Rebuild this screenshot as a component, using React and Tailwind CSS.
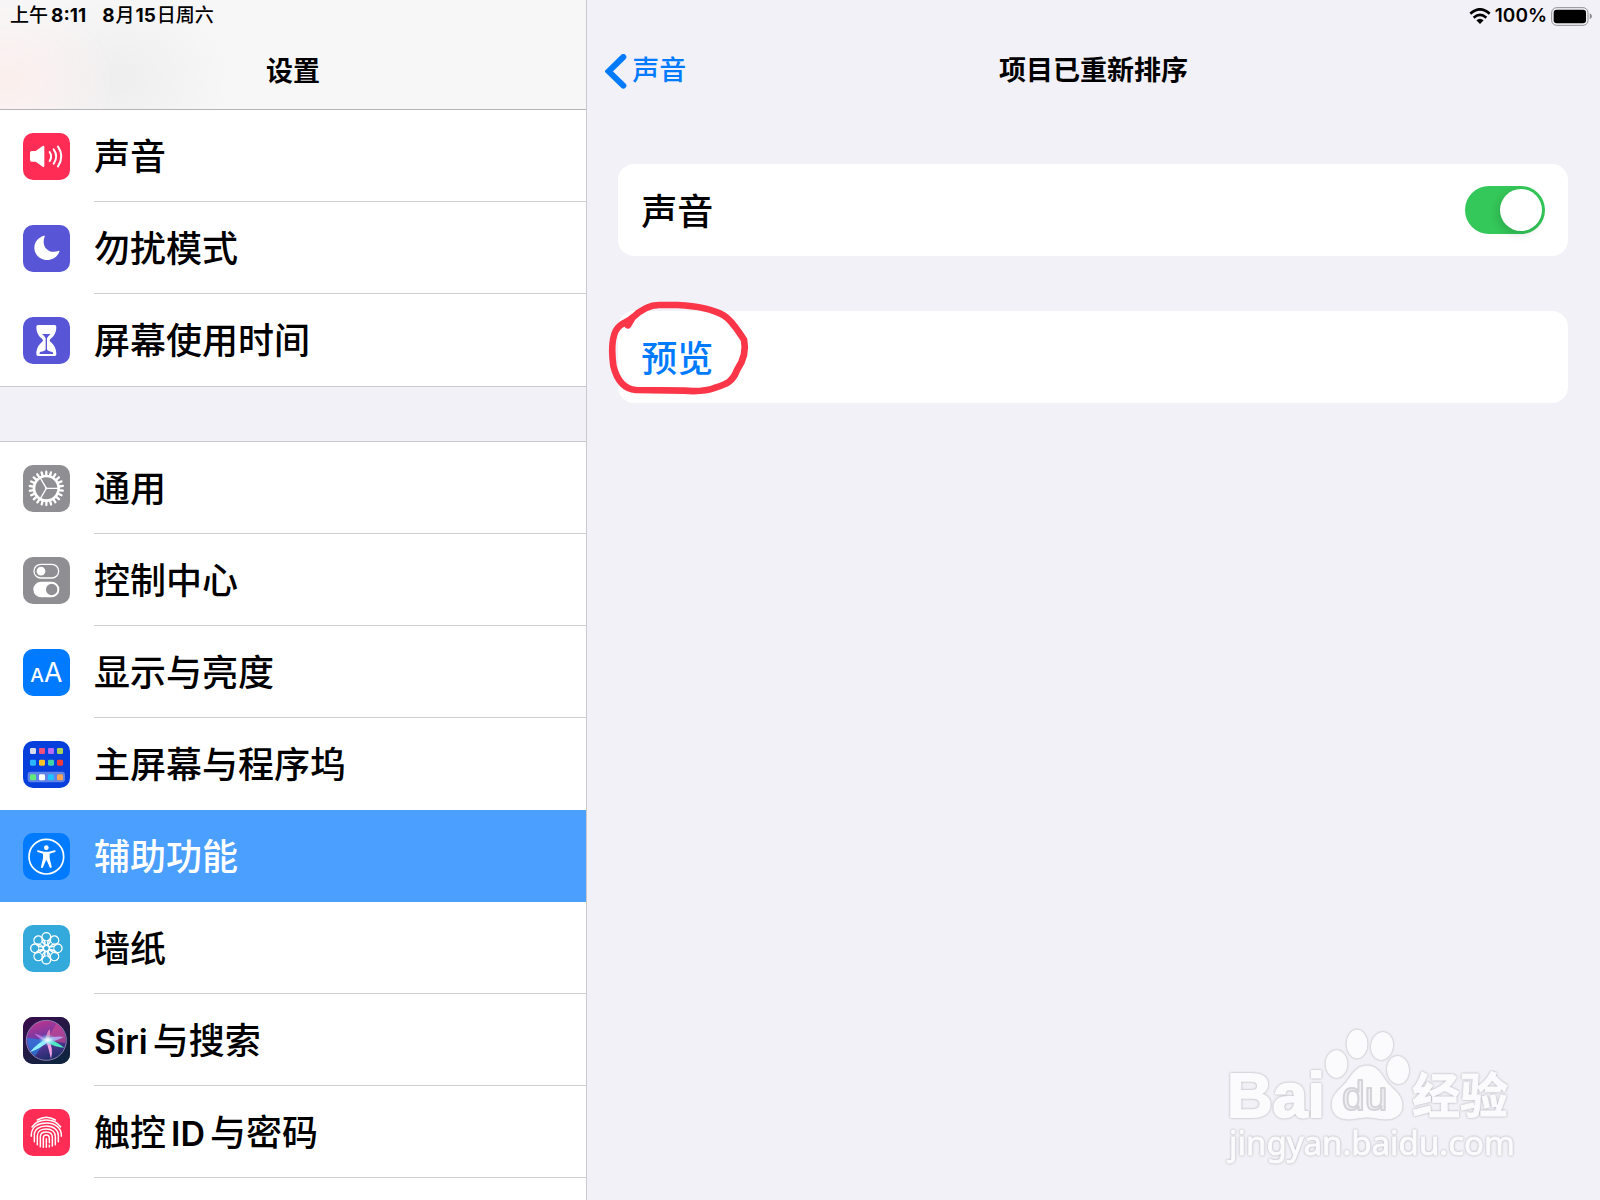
import React from 'react';

const angles = (count) => Array.from({ length: count }, (_, i) => (360 / count) * i);

const SoundIcon = () => (
  <g>
    <path
      d="M26 54h12L59 39q5-3 5 3v56q0 6-5 3L38 86H26q-5 0-5-5V59q0-5 5-5z"
      fill="#fff"
    />
    <g fill="none" stroke="#fff" strokeWidth="6" strokeLinecap="round">
      <path d="M80 57q9 13 0 27" />
      <path d="M92 49q15 21 0 43" />
      <path d="M105 41q20 29 0 59" />
    </g>
  </g>
);

const MoonIcon = () => (
  <path
    d="M62 32C46 38 34 50 34 68c0 21 17 37 38 37 17 0 32-10 37-25 1-2-1-3-3-2-23 8-44-5-44-28 0-6 1-11 3-15 1-2-1-4-3-3z"
    fill="#fff"
  />
);

const HourglassIcon = () => (
  <g>
    <path
      d="M45 24h50q5 0 5 5c0 19-8 29-18 37q-4 4 0 8c10 8 18 18 18 38q0 5-5 5H45q-5 0-5-5c0-20 8-30 18-38q4-4 0-8C48 58 40 48 40 29q0-5 5-5z"
      fill="#fff"
    />
    <path
      d="M57 51h26q-9 7-11 13v33q2 6 17 8 2 4 1 6H50q-1-2 1-6 15-2 17-8V64q-2-6-11-13z"
      fill="#5856d6"
    />
  </g>
);

const GearIcon = () => (
  <g transform="translate(70 70)" fill="none" stroke="#fff">
    <circle r="37" strokeWidth="8" />
    {angles(22).map((a) => (
      <path key={a} d="M38 0H50" strokeWidth="7" strokeLinecap="round" transform={`rotate(${a + 8})`} />
    ))}
    {angles(3).map((a) => (
      <path key={a} d="M0 0H37" strokeWidth="4" transform={`rotate(${a})`} />
    ))}
    <circle r="3" fill="#fff" stroke="none" />
  </g>
);

const ControlIcon = () => (
  <g>
    <rect x="33" y="22" width="74" height="41" rx="20.5" fill="none" stroke="#fff" strokeWidth="4" />
    <circle cx="54" cy="42.500" r="13" fill="#fff" />
    <rect x="31" y="74" width="78" height="47" rx="23.5" fill="#fff" />
    <circle cx="86" cy="97.500" r="17" fill="#8e8e93" />
  </g>
);

const DisplayIcon = () => (
  <g fill="#fff" className="font-[Inter] font-medium">
    <text x="22" y="99" fontSize="58">A</text>
    <text x="63" y="99" fontSize="80" className="font-normal">A</text>
  </g>
);

const dots = [
  ['#d9dcec', '#f4507e', '#b46cf5', '#a9d455'],
  ['#2bb5ff', '#ffc328', '#41d3a9', '#f03b3b'],
  ['#62ea7b', '#ffffff', '#20c3ff', '#f7a456'],
];

const HomeIcon = () => (
  <g>
    <rect x="14" y="92" width="112" height="32" rx="9" fill="#5f83e6" />
    {dots.map((row, r) =>
      row.map((color, c) => (
        <rect key={color} x={21 + c * 27} y={[21, 56, 100][r]} width="18" height="18" rx="4" fill={color} />
      ))
    )}
  </g>
);

const AccessibilityIcon = () => (
  <g>
    <circle cx="70" cy="71" r="52" fill="none" stroke="#fff" strokeWidth="5" />
    <circle cx="70" cy="44" r="7" fill="#fff" />
    <path
      d="M45 52l18 4h14l18-4q3 0 3 2t-2 3l-16 5v14l6 25q0 3-2 4t-4-2L71 82h-2l-9 21q-1 3-4 2t-2-4l6-25V62l-16-5q-2-1-2-3t3-2z"
      fill="#fff"
    />
  </g>
);

const WallpaperIcon = () => (
  <g transform="translate(70 70)" fill="none" stroke="#fff" strokeWidth="4">
    {angles(8).map((a) => (
      <path
        key={a}
        d="M9 0C12 -9 22 -14 34 -13A13 13 0 0 1 34 13C22 14 12 9 9 0z"
        transform={`rotate(${a})`}
      />
    ))}
    {angles(8).map((a) => (
      <path key={a} d="M25 -11Q20 0 25 11" strokeWidth="3" transform={`rotate(${a})`} />
    ))}
    <circle r="9" />
  </g>
);

const SiriIcon = () => (
  <g>
    <defs>
      <linearGradient id="siriBg" x1="0" y1="0" x2="0.6" y2="1">
        <stop offset="0" stopColor="#3a0b4c" />
        <stop offset="1" stopColor="#10243f" />
      </linearGradient>
      <linearGradient id="siriBall" x1="0.3" y1="0" x2="0.6" y2="1">
        <stop offset="0" stopColor="#c0348c" />
        <stop offset="0.45" stopColor="#6a3aa8" />
        <stop offset="1" stopColor="#1b2c66" />
      </linearGradient>
      <radialGradient id="siriGlow">
        <stop offset="0" stopColor="#fff" />
        <stop offset="0.35" stopColor="#c9f4ff" stopOpacity="0.8" />
        <stop offset="1" stopColor="#58c6ff" stopOpacity="0" />
      </radialGradient>
    </defs>
    <rect width="141" height="141" fill="url(#siriBg)" />
    <circle cx="70" cy="70" r="60" fill="url(#siriBall)" stroke="#8d7fae" strokeWidth="3" />
    <path d="M70 70L12 62Q14 100 36 117z" fill="#2a7be0" opacity="0.75" />
    <path d="M70 70L100 20Q132 40 127 78z" fill="#d84a8e" opacity="0.6" />
    <path d="M70 66Q46 76 20 106Q50 96 74 76z" fill="#8ff0ff" />
    <path d="M68 70Q76 90 84 126Q92 94 78 70z" fill="#f3a3e4" />
    <path d="M70 66Q96 70 124 92Q98 92 72 76z" fill="#4fe8c0" />
    <path d="M72 66Q96 56 122 60Q100 74 74 72z" fill="#b9b4ff" opacity="0.8" />
    <path d="M68 70Q70 46 80 36Q84 54 76 70z" fill="#ff8fc4" opacity="0.8" />
    <path d="M68 70Q56 52 34 50Q48 66 68 74z" fill="#c77bea" opacity="0.8" />
    <ellipse cx="74" cy="69" rx="27" ry="18" fill="url(#siriGlow)" />
  </g>
);

const FingerprintIcon = () => (
  <g fill="none" stroke="#fff" strokeWidth="4.500" strokeLinecap="round">
    <path d="M43 33Q70 17 97 33" />
    <path d="M27 54Q41 33 70 33T113 54" />
    <path d="M25 82V75C27 53 46 42 70 42c26 0 45 14 45 37v3" />
    <path d="M34 98V78C34 61 49 51 70 51c22 0 36 12 36 29v18" />
    <path d="M43 107V80c0-13 12-20 27-20 17 0 27 9 27 22v25" />
    <path d="M52 113V83c0-9 8-14 18-14 12 0 18 6 18 16v26" />
    <path d="M61 115V87c0-6 4-9 9-9 6 0 9 4 9 11v12M79 109v5" />
    <path d="M70 115V89" />
  </g>
);

const groups = [
  [
    { label: '声音', bg: '#ff2d55', icon: SoundIcon },
    { label: '勿扰模式', bg: '#5856d6', icon: MoonIcon },
    { label: '屏幕使用时间', bg: '#5856d6', icon: HourglassIcon },
  ],
  [
    { label: '通用', bg: '#8e8e93', icon: GearIcon },
    { label: '控制中心', bg: '#8e8e93', icon: ControlIcon },
    { label: '显示与亮度', bg: '#007aff', icon: DisplayIcon },
    { label: '主屏幕与程序坞', bg: '#063fdc', icon: HomeIcon, noLine: true },
    { label: '辅助功能', bg: '#007aff', icon: AccessibilityIcon, active: true, noLine: true },
    { label: '墙纸', bg: '#34aadc', icon: WallpaperIcon },
    { label: 'Siri与搜索', bg: '#20133a', icon: SiriIcon },
    { label: '触控ID与密码', bg: '#ff2d55', icon: FingerprintIcon },
  ],
];

// Latin runs sit slightly apart from the Chinese ones and are set a little smaller
const Label = ({ text }) =>
  text.split(/([A-Za-z]+)/).filter(Boolean).map((part) => (
    <span key={part} className={/[A-Za-z]/.test(part) ? 'text-[34px] font-semibold' : ''}>
      {part}
    </span>
  ));

const MenuItem = ({ item, last }) => {
  const Icon = item.icon;
  return (
    <li>
      <a
        href="#"
        aria-current={item.active ? 'page' : undefined}
        className={`flex h-[92px] items-center gap-6 pl-[23px] ${item.active ? 'bg-[#4ba0ff] text-white' : ''}`}
      >
        <svg viewBox="0 0 141 141" className="mt-px size-[47px] shrink-0 rounded-[10px]" aria-hidden="true">
          <rect width="141" height="141" fill={item.bg} />
          <Icon />
        </svg>
        <span
          className={`flex h-full flex-1 items-center gap-[5px] border-b pt-[3px] ${
            item.noLine || last ? 'border-transparent' : 'border-[#d1d1d4]'
          }`}
        >
          <Label text={item.label} />
        </span>
      </a>
    </li>
  );
};

const Sidebar = () => (
  <aside className="w-[36.7%] shrink-0 border-r border-[#c9c9ce] bg-white">
    <header className="h-[110px] border-b border-[#b4b4b6] bg-[#f7f7f8] bg-[radial-gradient(ellipse_110px_90px_at_10px_80px,#fbefed,transparent),radial-gradient(ellipse_110px_90px_at_120px_80px,#eeeeef,transparent)]">
      <div className="flex h-8 items-center gap-4 pl-[10px] text-[19px] font-medium">
        <span className="flex gap-[3px]">
          上午<b>8:11</b>
        </span>
        <span className="flex gap-px">
          <b>8</b>月<b>15</b>日周六
        </span>
      </div>
      <h1 className="flex h-[77px] items-center justify-center pt-1 text-[27px] font-bold">设置</h1>
    </header>
    <nav className="text-[36px] font-medium">
      <ul>
        {groups[0].map((item, i) => (
          <MenuItem key={item.label} item={item} last={i === 2} />
        ))}
      </ul>
      <div className="h-14 border-y border-[#c9c9ce] bg-[#f2f1f7]" />
      <ul>
        {groups[1].map((item) => (
          <MenuItem key={item.label} item={item} />
        ))}
      </ul>
    </nav>
  </aside>
);

const StatusIcons = () => (
  <div className="flex h-8 items-center justify-end gap-1 pr-2 text-[19px] font-semibold">
    <svg viewBox="0 0 66 48" className="h-4 w-[22px]" aria-hidden="true">
      <g fill="none" stroke="#000" strokeWidth="8">
        <path d="M4 17Q33-9 62 17" />
        <path d="M14 29Q33 12 52 29" />
      </g>
      <path d="M22 37Q33 28 44 37L33 48z" />
    </svg>
    <span>100%</span>
    <svg viewBox="0 0 123 57" className="h-[19px] w-[41px]" aria-hidden="true">
      <rect x="2" y="2" width="109" height="53" rx="15" fill="none" stroke="#8f8f94" strokeWidth="3" />
      <rect x="8" y="8" width="97" height="41" rx="9" />
      <path d="M116 19q7 3 7 9t-7 9z" fill="#8f8f94" />
    </svg>
  </div>
);

const Watermark = () => (
  <svg
    viewBox="0 0 340 180"
    className="absolute right-[60px] bottom-[10px] w-[340px] drop-shadow-[0_0_1px_#a8a8ae]"
    aria-hidden="true"
  >
    <g fill="#fbfbfe" stroke="#fbfbfe" strokeLinejoin="round">
      <text x="27" y="107" fontSize="63" strokeWidth="2" className="font-['Liberation_Sans'] font-bold">Bai</text>
      <ellipse cx="136.500" cy="54" rx="10.500" ry="13.500" />
      <ellipse cx="157" cy="34" rx="10" ry="14" />
      <ellipse cx="182" cy="36" rx="10.500" ry="13.500" transform="rotate(10 182 36)" />
      <ellipse cx="198" cy="60" rx="10.500" ry="13.500" transform="rotate(-5 198 60)" />
      <path d="M167 56c9 0 13 6 18 14 6 9 17 13 17 26 0 9-8 13-16 13-7 0-12-2-19-2s-12 2-18 2c-9 0-17-4-17-14 0-12 10-16 17-26 5-7 9-13 18-13z" />
      <text x="142" y="100" fontSize="41" fill="#f2f2f6" stroke="#d3d3d8" strokeWidth="2" className="font-['Liberation_Sans']">
        du
      </text>
      <text x="212" y="103" fontSize="48" strokeWidth="1" className="font-['Noto_Sans_CJK_SC'] font-bold">经验</text>
      <text x="29" y="145" fontSize="33" strokeWidth="1" className="font-['Noto_Sans']">jingyan.baidu.com</text>
    </g>
  </svg>
);

const Detail = () => (
  <main className="relative min-w-0 flex-1 bg-[#f2f1f7]">
    <StatusIcons />
    <header className="grid h-[78px] grid-cols-[1fr_auto_1fr] items-center pt-px text-[27px]">
      <a href="#" className="flex items-center gap-[5px] pl-[18px] font-medium text-[#007aff]">
        <svg viewBox="0 0 66 105" className="h-[35px] w-[22px]" aria-hidden="true">
          <path
            d="M55 9L11 52l44 43"
            fill="none"
            stroke="currentColor"
            strokeWidth="18"
            strokeLinecap="round"
          />
        </svg>
        声音
      </a>
      <h2 className="font-bold">项目已重新排序</h2>
    </header>
    <div className="mt-[54px] mr-8 ml-[31px] flex flex-col gap-[55px] text-[36px] font-medium">
      <label className="flex h-[92px] items-center justify-between rounded-2xl bg-white px-[23px]">
        <span className="pt-[3px]">声音</span>
        <input
          type="checkbox"
          role="switch"
          defaultChecked
          className="relative h-12 w-20 appearance-none rounded-full bg-[#e9e9eb] before:absolute before:top-[3px] before:left-[3px] before:size-[42px] before:rounded-full before:bg-white before:shadow-[-2px_3px_8px_rgba(0,0,0,0.15)] checked:bg-[#34c759] checked:before:left-[35px]"
        />
      </label>
      <div className="relative">
        <button
          type="button"
          className="flex h-[92px] w-full items-center rounded-2xl bg-white px-[23px] pt-[3px] text-[#007aff]"
        >
          预览
        </button>
        <svg
          viewBox="0 0 420 291"
          className="pointer-events-none absolute -top-3 -left-[11px] w-[140px] overflow-visible"
          aria-hidden="true"
        >
          <path
            d="M63 79L76 57C100 33 125 18 157 18L212 18C272 21 322 33 350 49C377 65 395 100 411 122C417 150 413 180 390 213C376 252 353 257 322 267C297 277 272 278 230 275L87 273C52 270 30 245 19 200C12 145 15 97 40 79C54 69 66 67 80 53"
            fill="none"
            stroke="#fa3648"
            strokeWidth="20"
            strokeLinecap="round"
            strokeLinejoin="round"
          />
        </svg>
      </div>
    </div>
    <Watermark />
  </main>
);

const App = () => (
  <div className="flex min-h-screen font-[Inter,'Noto_Sans_CJK_SC',sans-serif] text-black">
    <Sidebar />
    <Detail />
  </div>
);

export default App;
